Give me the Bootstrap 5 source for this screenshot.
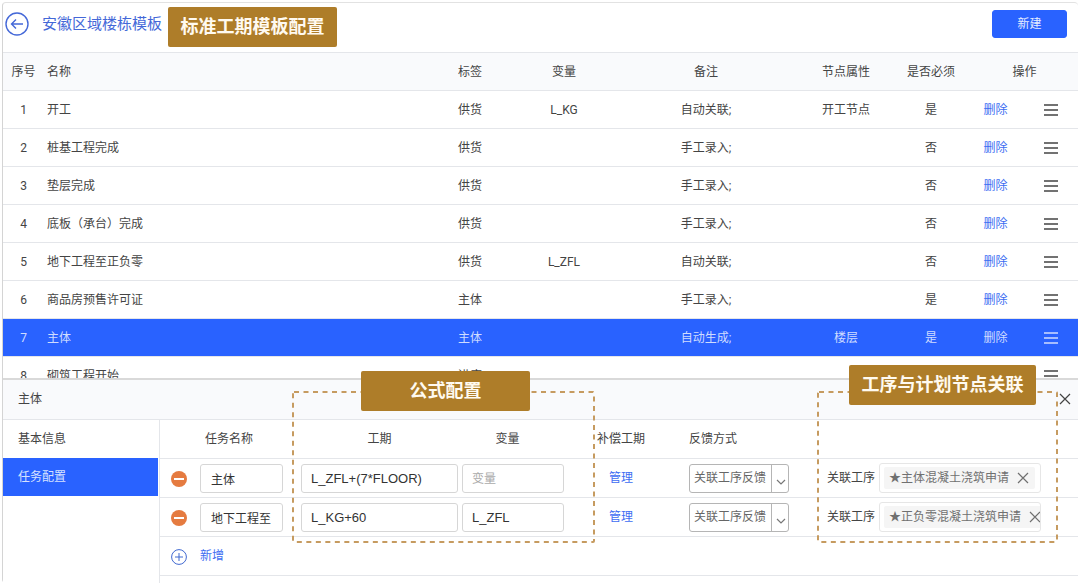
<!DOCTYPE html>
<html lang="zh-CN">
<head>
<meta charset="utf-8">
<meta name="viewport" content="width=device-width, initial-scale=1">
<title>安徽区域楼栋模板</title>
<link href="https://cdn.jsdelivr.net/npm/bootstrap@5.3.0/dist/css/bootstrap.min.css" rel="stylesheet">
<style>
  :root { --blue: #2962ff; --gold: #ae7d29; --line: #e4e6ea; --ink: #444; }
  body { font-family: Roboto, "Noto Sans CJK SC", sans-serif; font-size: 12px; line-height: 18px; color: var(--ink); background: #fff; }
  .app-frame { height: 100vh; border: 2px solid #fff; overflow: hidden; }
  .app-inner { border-top: 1px solid #e2e2e2; border-left: 1px solid #d4d4d4; border-radius: 4px; min-height: 0; }
  .top-bar { height: 49px; padding: 0 11px 8px 2px; }
  .page-title { margin: 0 6px 0 13px; font-size: 15px; line-height: 24px; color: #4468d8; }
  .flag { background: var(--gold); color: #fffaf0; font-size: 18px; font-weight: 700; line-height: 40px; text-align: center; border-radius: 2px; white-space: nowrap; }
  .flag-title { width: 169px; margin-top: 6px; }
  .btn-new { --bs-btn-bg: var(--blue); --bs-btn-border-color: var(--blue); --bs-btn-color: #e6edff; --bs-btn-font-size: 12px; --bs-btn-padding-y: 0; width: 75px; height: 28px; line-height: 18px; border-radius: 3px; }
  .list-area { min-height: 0; }
  .grid-table { table-layout: fixed; margin: 0; color: var(--ink); --bs-table-bg: transparent; --bs-table-color: var(--ink); }
  .grid-table > :not(caption) > * > * { padding: 0; height: 38px; vertical-align: middle; font-weight: 400; border-bottom: 1px solid var(--line); color: inherit; white-space: nowrap; }
  .grid-table thead { background: #f9fafc; border-top: 1px solid var(--line); }
  .grid-table .col-name { text-align: left; padding-left: 3px; }
  .grid-table a { color: #3d6df2; text-decoration: none; }
  .grid-table tr.picked { background: var(--blue); color: #cfdcff; }
  .grid-table tr.picked a { color: #cfdcff; }
  .icon-btn { background: none; border: 0; padding: 0; color: inherit; line-height: 0; }
  .drawer { background: #fff; border-top: 2px solid #d9d9d9; }
  .drawer-head { height: 40px; padding: 0 7px 0 15px; background: #f9fafc; border-bottom: 1px solid var(--line); }
  .side-menu { width: 157px; border-right: 1px solid var(--line); }
  .side-menu a { display: block; padding-left: 15px; line-height: 38px; color: var(--ink); text-decoration: none; }
  .side-menu a.active { background: var(--blue); color: #d6e1ff; margin-right: 1px; }
  .task-pane { padding-bottom: 7px; }
  .task-table > :not(caption) > * > * { height: 39px; }
  .task-table thead { background: #fff; border-top: 0; }
  .task-table .col-task { padding-left: 3px; }
  .task-table .col-mode { padding-left: 12px; }
  .task-table .head-var { padding-right: 10px; }
  .field { height: 29px; margin-left: 2px; padding: 0 9px; border: 1px solid #d6d6d6; border-radius: 3px; font-family: "Liberation Sans", "Noto Sans CJK SC", sans-serif; font-size: 13px; color: #333; box-shadow: none; }
  .field-name { width: 83px; margin-left: 0; font-size: 12px; padding: 0 10px; }
  .field-days { width: 157px; }
  .field-var { width: 102px; }
  .field::placeholder { color: #aaa; font-size: 12px; opacity: 1; }
  .pick { width: 100px; }
  .pick select { width: 100%; height: 29px; padding: 0 0 0 4px; font-size: 12px; color: #666; background: #fff; border: 1px solid #b5b5b5; border-radius: 3px; appearance: none; }
  .pick span { width: 18px; border-left: 1px solid #b5b5b5; color: #777; pointer-events: none; }
  .tag-box { width: 162px; height: 30px; padding: 3px 4px; border: 1px solid #e6e6e6; border-radius: 3px; overflow: hidden; }
  .tag-item { padding: 0 6px 0 5px; background: #f5f5f5; color: #707070; line-height: 22px; border-radius: 2px; }
  .outline-box { pointer-events: none; top: 11px; height: 152px; }
  .outline-box svg { display: block; width: 100%; height: 100%; }
  .outline-formula { left: 289px; width: 303px; }
  .outline-link { right: 20px; width: 241px; }
  .flag-formula { top: -9px; left: 358px; width: 169px; }
  .flag-link { top: -15px; right: 42px; width: 187px; }
</style>
</head>
<body>
<svg class="d-none" xmlns="http://www.w3.org/2000/svg">
  <symbol id="bars" viewBox="0 0 14 12"><path d="M0 1h14M0 6h14M0 11h14" stroke="currentColor" stroke-width="1.5"/></symbol>
  <symbol id="cross" viewBox="0 0 12 12"><path d="M1 1l10 10M11 1L1 11" stroke="currentColor" stroke-width="1.2"/></symbol>
  <symbol id="minus" viewBox="0 0 16 16"><circle cx="8" cy="8" r="8" fill="#e57b40"/><path d="M3 8h10" stroke="#fff" stroke-width="2"/></symbol>
  <symbol id="chev" viewBox="0 0 10 6"><path d="M1 1l4 4 4-4" fill="none" stroke="currentColor" stroke-width="1.2"/></symbol>
</svg>
<div class="app-frame">
 <div class="app-inner h-100 d-flex flex-column">
  <header class="top-bar d-flex align-items-center flex-shrink-0">
    <button class="icon-btn" type="button" aria-label="返回">
      <svg width="24" height="24" viewBox="0 0 24 24" fill="none" stroke="#4468d8" stroke-width="1.4"><circle cx="12" cy="12" r="11"/><path d="M18 12H7M11 7.500l-4.500 4.500 4.500 4.500"/></svg>
    </button>
    <span class="page-title text-nowrap" id="pageTitle">安徽区域楼栋模板</span>
    <span class="flag flag-title">标准工期模板配置</span>
    <button class="btn btn-primary btn-new ms-auto" type="button">新建</button>
  </header>

  <main class="list-area flex-grow-1 overflow-hidden">
    <table class="table grid-table text-center" aria-labelledby="pageTitle">
      <colgroup><col style="width:41px"><col><col style="width:86px"><col style="width:102px"><col style="width:182px"><col style="width:98px"><col style="width:72px"><col style="width:57px"><col style="width:54px"></colgroup>
      <thead><tr><th>序号</th><th class="col-name">名称</th><th>标签</th><th>变量</th><th>备注</th><th>节点属性</th><th>是否必须</th><th class="ps-1" colspan="2">操作</th></tr></thead>
      <tbody>
        <tr><td>1</td><td class="col-name">开工</td><td>供货</td><td>L_KG</td><td>自动关联;</td><td>开工节点</td><td>是</td><td><a href="#">删除</a></td><td><button class="icon-btn" type="button" aria-label="排序"><svg width="14" height="12"><use href="#bars"/></svg></button></td></tr>
        <tr><td>2</td><td class="col-name">桩基工程完成</td><td>供货</td><td></td><td>手工录入;</td><td></td><td>否</td><td><a href="#">删除</a></td><td><button class="icon-btn" type="button" aria-label="排序"><svg width="14" height="12"><use href="#bars"/></svg></button></td></tr>
        <tr><td>3</td><td class="col-name">垫层完成</td><td>供货</td><td></td><td>手工录入;</td><td></td><td>否</td><td><a href="#">删除</a></td><td><button class="icon-btn" type="button" aria-label="排序"><svg width="14" height="12"><use href="#bars"/></svg></button></td></tr>
        <tr><td>4</td><td class="col-name">底板（承台）完成</td><td>供货</td><td></td><td>手工录入;</td><td></td><td>否</td><td><a href="#">删除</a></td><td><button class="icon-btn" type="button" aria-label="排序"><svg width="14" height="12"><use href="#bars"/></svg></button></td></tr>
        <tr><td>5</td><td class="col-name">地下工程至正负零</td><td>供货</td><td>L_ZFL</td><td>自动关联;</td><td></td><td>否</td><td><a href="#">删除</a></td><td><button class="icon-btn" type="button" aria-label="排序"><svg width="14" height="12"><use href="#bars"/></svg></button></td></tr>
        <tr><td>6</td><td class="col-name">商品房预售许可证</td><td>主体</td><td></td><td>手工录入;</td><td></td><td>是</td><td><a href="#">删除</a></td><td><button class="icon-btn" type="button" aria-label="排序"><svg width="14" height="12"><use href="#bars"/></svg></button></td></tr>
        <tr class="picked"><td>7</td><td class="col-name">主体</td><td>主体</td><td></td><td>自动生成;</td><td>楼层</td><td>是</td><td><a href="#">删除</a></td><td><button class="icon-btn" type="button" aria-label="排序"><svg width="14" height="12"><use href="#bars"/></svg></button></td></tr>
        <tr><td>8</td><td class="col-name">砌筑工程开始</td><td>进度</td><td></td><td></td><td></td><td></td><td></td><td><button class="icon-btn" type="button" aria-label="排序"><svg width="14" height="12"><use href="#bars"/></svg></button></td></tr>
      </tbody>
    </table>
  </main>

  <section class="drawer position-relative flex-shrink-0" aria-labelledby="drawerTitle">
    <div class="drawer-head d-flex align-items-center justify-content-between">
      <span id="drawerTitle">主体</span>
      <button class="icon-btn" type="button" aria-label="关闭"><svg width="12" height="12"><use href="#cross"/></svg></button>
    </div>
    <div class="d-flex">
      <nav class="side-menu flex-shrink-0">
        <a href="#">基本信息</a>
        <a href="#" class="active" aria-current="page">任务配置</a>
      </nav>
      <div class="task-pane flex-grow-1">
        <table class="table grid-table task-table">
          <colgroup><col style="width:37px"><col style="width:102px"><col style="width:161px"><col style="width:105px"><col style="width:112px"><col><col style="width:251px"></colgroup>
          <thead><tr><th></th><th class="ps-2">任务名称</th><th class="text-center">工期</th><th class="text-center head-var">变量</th><th class="text-center">补偿工期</th><th class="col-mode">反馈方式</th><th></th></tr></thead>
          <tbody>
            <tr>
              <td class="text-center"><button class="icon-btn" type="button" aria-label="移除"><svg width="16" height="16"><use href="#minus"/></svg></button></td>
              <td class="col-task"><input class="form-control field field-name" value="主体" aria-label="任务名称"></td>
              <td><input class="form-control field field-days" value="L_ZFL+(7*FLOOR)" aria-label="工期"></td>
              <td><input class="form-control field field-var" placeholder="变量" aria-label="变量"></td>
              <td class="text-center"><a href="#">管理</a></td>
              <td class="col-mode"><div class="pick position-relative"><select aria-label="反馈方式"><option>关联工序反馈</option></select><span class="position-absolute top-0 end-0 h-100 d-flex align-items-center justify-content-center pt-2"><svg width="10" height="6"><use href="#chev"/></svg></span></div></td>
              <td><div class="d-flex align-items-center"><span class="me-1">关联工序</span><div class="tag-box d-flex"><span class="tag-item d-flex align-items-center flex-shrink-0">★主体混凝土浇筑申请<button class="icon-btn ms-2" type="button" aria-label="删除标签"><svg width="12" height="12"><use href="#cross"/></svg></button></span></div></div></td>
            </tr>
            <tr>
              <td class="text-center"><button class="icon-btn" type="button" aria-label="移除"><svg width="16" height="16"><use href="#minus"/></svg></button></td>
              <td class="col-task"><input class="form-control field field-name" value="地下工程至" aria-label="任务名称"></td>
              <td><input class="form-control field field-days" value="L_KG+60" aria-label="工期"></td>
              <td><input class="form-control field field-var" value="L_ZFL" aria-label="变量"></td>
              <td class="text-center"><a href="#">管理</a></td>
              <td class="col-mode"><div class="pick position-relative"><select aria-label="反馈方式"><option>关联工序反馈</option></select><span class="position-absolute top-0 end-0 h-100 d-flex align-items-center justify-content-center pt-2"><svg width="10" height="6"><use href="#chev"/></svg></span></div></td>
              <td><div class="d-flex align-items-center"><span class="me-1">关联工序</span><div class="tag-box d-flex"><span class="tag-item d-flex align-items-center flex-shrink-0">★正负零混凝土浇筑申请<button class="icon-btn ms-2" type="button" aria-label="删除标签"><svg width="12" height="12"><use href="#cross"/></svg></button></span></div></div></td>
            </tr>
            <tr>
              <td class="text-center"><svg width="16" height="16" viewBox="0 0 16 16" fill="none" stroke="#3f68d0" stroke-width="1"><circle cx="8" cy="8" r="7.400"/><path d="M8 4v8M4 8h8"/></svg></td>
              <td class="col-task" colspan="6"><a href="#">新增</a></td>
            </tr>
          </tbody>
        </table>
      </div>
    </div>
    <div class="outline-box outline-formula position-absolute"><svg><rect x="1" y="1" width="301" height="150" rx="1" fill="none" stroke="#c69b60" stroke-width="2" stroke-dasharray="5 4.500"/></svg></div>
    <span class="flag flag-formula position-absolute">公式配置</span>
    <div class="outline-box outline-link position-absolute"><svg><rect x="1" y="1" width="239" height="150" rx="1" fill="none" stroke="#c69b60" stroke-width="2" stroke-dasharray="5 4.500"/></svg></div>
    <span class="flag flag-link position-absolute">工序与计划节点关联</span>
  </section>
 </div>
</div>
<script src="https://cdn.jsdelivr.net/npm/bootstrap@5.3.0/dist/js/bootstrap.bundle.min.js"></script>
</body>
</html>
